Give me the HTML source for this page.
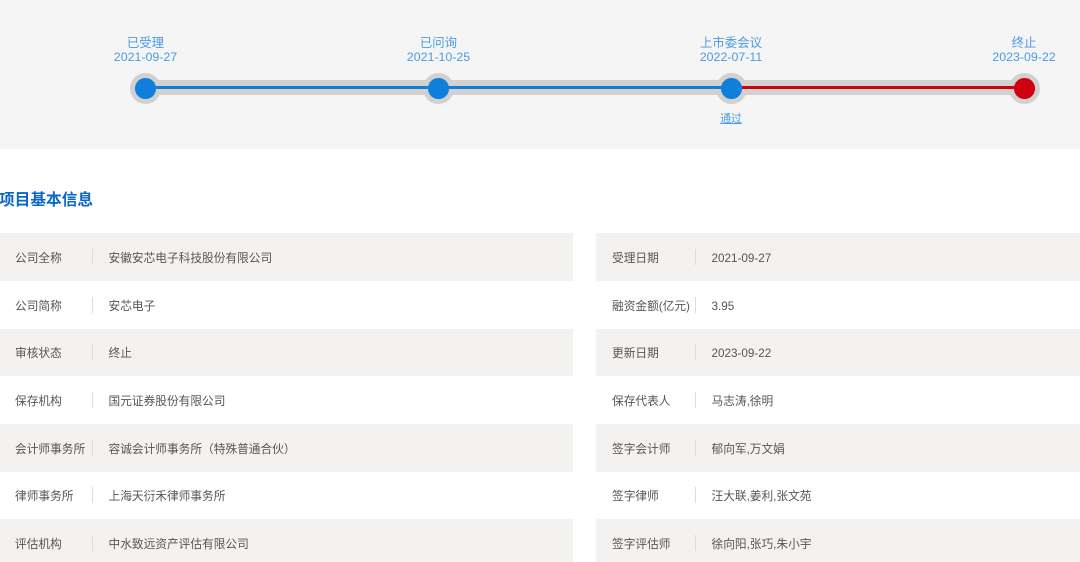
<!DOCTYPE html>
<html lang="zh">
<head>
<meta charset="utf-8">
<style>
html,body{margin:0;padding:0;width:1080px;height:562px;overflow:hidden;background:#fff}
body{position:relative;font-family:"Liberation Sans","Noto Sans CJK SC",sans-serif;font-size:11.7px;color:#555}
div{position:absolute;box-sizing:border-box}
.band{left:0;top:0;width:1080px;height:149px;background:#f5f5f5}
.track{left:145px;top:79.5px;width:879px;height:15px;background:#d2d1cf}
.line{top:86px;height:3px}
.halo{width:31px;height:31px;border-radius:50%;background:#d2d1cf;top:72.5px}
.dot{width:20.5px;height:20.5px;border-radius:50%;top:78.2px}
.lab{width:120px;text-align:center;color:#4a9be4;font-size:12.4px;line-height:15px;white-space:nowrap;filter:blur(.25px)}
.title{left:-1px;top:190px;font-size:15.7px;line-height:22px;font-weight:bold;color:#0b67c4;white-space:nowrap}
.bg{height:47.7px;background:#f4f2f1}
.t{line-height:16px;white-space:nowrap;filter:blur(.25px)}
.sep{width:1px;height:16px;background:#dcdcdc}
</style>
</head>
<body>
<div class="band"></div>
<div class="track"></div>

<div class="halo" style="left:130px"></div>
<div class="halo" style="left:423px"></div>
<div class="halo" style="left:716px"></div>
<div class="halo" style="left:1009px"></div>

<div class="line" style="left:145px;width:586px;background:#0f7fdb"></div>
<div class="line" style="left:731px;width:293px;background:#cf0010"></div>

<div class="dot" style="left:135.25px;background:#0f7fdb"></div>
<div class="dot" style="left:428.25px;background:#0f7fdb"></div>
<div class="dot" style="left:721.25px;background:#0f7fdb"></div>
<div class="dot" style="left:1014.25px;background:#cf0010"></div>

<div class="lab" style="left:85.5px;top:36px">已受理</div><div class="lab" style="left:85.5px;top:50px">2021-09-27</div>
<div class="lab" style="left:378.5px;top:36px">已问询</div><div class="lab" style="left:378.5px;top:50px">2021-10-25</div>
<div class="lab" style="left:671px;top:36px">上市委会议</div><div class="lab" style="left:671px;top:50px">2022-07-11</div>
<div class="lab" style="left:964px;top:36px">终止</div><div class="lab" style="left:964px;top:50px">2023-09-22</div>
<div class="lab" style="left:671px;top:112px;font-size:10.8px;text-decoration:underline">通过</div>

<div class="title">项目基本信息</div>

<div class="bg" style="left:0;top:233px;width:573px"></div><div class="bg" style="left:596px;top:233px;width:484px"></div>
<div class="bg" style="left:0;top:328.5px;width:573px"></div><div class="bg" style="left:596px;top:328.5px;width:484px"></div>
<div class="bg" style="left:0;top:424px;width:573px"></div><div class="bg" style="left:596px;top:424px;width:484px"></div>
<div class="bg" style="left:0;top:519px;width:573px;height:43px"></div><div class="bg" style="left:596px;top:519px;width:484px;height:43px"></div>

<div class="t" style="left:15px;top:251px">公司全称</div><div class="sep" style="left:92px;top:249px"></div><div class="t" style="left:108.5px;top:251px">安徽安芯电子科技股份有限公司</div>
<div class="t" style="left:612px;top:251px">受理日期</div><div class="sep" style="left:695px;top:249px"></div><div class="t" style="left:711.5px;top:251px">2021-09-27</div>

<div class="t" style="left:15px;top:299px">公司简称</div><div class="sep" style="left:92px;top:297px"></div><div class="t" style="left:108.5px;top:299px">安芯电子</div>
<div class="t" style="left:612px;top:299px">融资金额(亿元)</div><div class="sep" style="left:695px;top:297px"></div><div class="t" style="left:711.5px;top:299px">3.95</div>

<div class="t" style="left:15px;top:346px">审核状态</div><div class="sep" style="left:92px;top:344px"></div><div class="t" style="left:108.5px;top:346px">终止</div>
<div class="t" style="left:612px;top:346px">更新日期</div><div class="sep" style="left:695px;top:344px"></div><div class="t" style="left:711.5px;top:346px">2023-09-22</div>

<div class="t" style="left:15px;top:394px">保存机构</div><div class="sep" style="left:92px;top:392px"></div><div class="t" style="left:108.5px;top:394px">国元证券股份有限公司</div>
<div class="t" style="left:612px;top:394px">保存代表人</div><div class="sep" style="left:695px;top:392px"></div><div class="t" style="left:711.5px;top:394px">马志涛,徐明</div>

<div class="t" style="left:15px;top:442px">会计师事务所</div><div class="sep" style="left:92px;top:440px"></div><div class="t" style="left:108.5px;top:442px">容诚会计师事务所（特殊普通合伙）</div>
<div class="t" style="left:612px;top:442px">签字会计师</div><div class="sep" style="left:695px;top:440px"></div><div class="t" style="left:711.5px;top:442px">郁向军,万文娟</div>

<div class="t" style="left:15px;top:489px">律师事务所</div><div class="sep" style="left:92px;top:487px"></div><div class="t" style="left:108.5px;top:489px">上海天衍禾律师事务所</div>
<div class="t" style="left:612px;top:489px">签字律师</div><div class="sep" style="left:695px;top:487px"></div><div class="t" style="left:711.5px;top:489px">汪大联,姜利,张文苑</div>

<div class="t" style="left:15px;top:537px">评估机构</div><div class="sep" style="left:92px;top:535px"></div><div class="t" style="left:108.5px;top:537px">中水致远资产评估有限公司</div>
<div class="t" style="left:612px;top:537px">签字评估师</div><div class="sep" style="left:695px;top:535px"></div><div class="t" style="left:711.5px;top:537px">徐向阳,张巧,朱小宇</div>
</body>
</html>
